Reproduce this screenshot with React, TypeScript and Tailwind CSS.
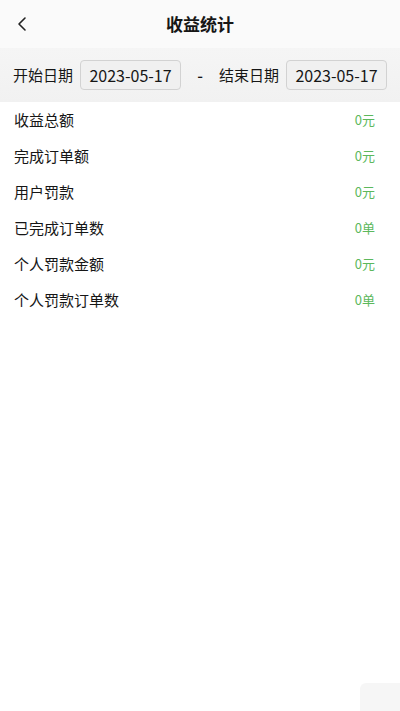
import { ChevronLeft } from 'lucide-react'

const rows = [
  { label: '收益总额', value: '0元' },
  { label: '完成订单额', value: '0元' },
  { label: '用户罚款', value: '0元' },
  { label: '已完成订单数', value: '0单' },
  { label: '个人罚款金额', value: '0元' },
  { label: '个人罚款订单数', value: '0单' },
]

export default function App() {
  return (
    <div
      className="relative min-h-[711px] bg-white text-[#161616]"
      style={{ fontFamily: '"Noto Sans CJK SC", "Noto Sans", sans-serif' }}
    >
      {/* Header */}
      <header className="relative flex h-[48px] items-center justify-center bg-[#fafafa]">
        <button className="absolute left-[10px] top-[12px] text-[#222]">
          <ChevronLeft className="h-[24px] w-[24px]" strokeWidth={1.6} />
        </button>
        <h1 className="text-[17px] font-bold">收益统计</h1>
      </header>

      {/* Date range */}
      <div className="flex h-[54px] items-center bg-gradient-to-b from-[#f5f5f5] to-[#f1f1f1] px-[13px] text-[15px]">
        <span className="mr-[7px]">开始日期</span>
        <div className="flex h-[30px] w-[101px] items-center justify-center rounded-[4px] border border-[#d2d2d2] bg-[#f0f0f0] text-[16px]">
          2023-05-17
        </div>
        <span className="mx-auto text-[16px] font-medium">-</span>
        <span className="mr-[7px]">结束日期</span>
        <div className="flex h-[30px] w-[101px] items-center justify-center rounded-[4px] border border-[#d2d2d2] bg-[#f0f0f0] text-[16px]">
          2023-05-17
        </div>
      </div>

      {/* Stats */}
      <ul className="px-[14px]">
        {rows.map((r) => (
          <li key={r.label} className="flex h-[36px] items-center justify-between">
            <span className="text-[15px]">{r.label}</span>
            <span className="pr-[11px] text-[13px] text-[#5cb85c]">{r.value}</span>
          </li>
        ))}
      </ul>

      <div className="absolute bottom-0 right-0 h-[28px] w-[40px] rounded-tl-[6px] bg-[#f6f6f6]" />
    </div>
  )
}
